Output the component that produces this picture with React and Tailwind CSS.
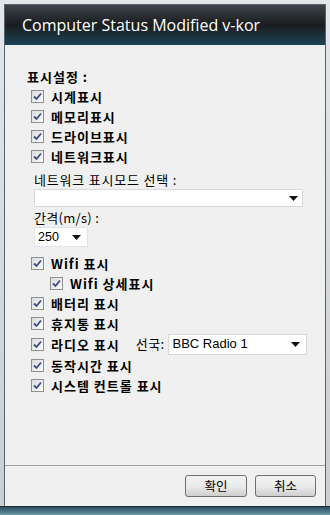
import React from 'react';

const KR = { fontFamily: '"Noto Sans CJK KR", "Liberation Sans", sans-serif' };

function Check({ label, className = '' }) {
  return (
    <div className={`flex items-center h-[20px] ${className}`}>
      <span className="w-[13px] h-[13px] border border-[#8e8f8f] bg-gradient-to-br from-[#dcdcdc] to-[#fbfbfb] flex items-center justify-center">
        <svg width="9" height="9" viewBox="0 0 9 9">
          <path d="M1 4.5 L3.5 7 L8 1.5" fill="none" stroke="#3c4b8a" strokeWidth="1.8" />
        </svg>
      </span>
      <span className="ml-[7px] text-[13px] tracking-[1px] font-bold text-black leading-none" style={KR}>{label}</span>
    </div>
  );
}

function Arrow() {
  return (
    <svg width="9" height="5" viewBox="0 0 9 5">
      <path d="M0 0 H9 L4.5 5 Z" fill="#111" />
    </svg>
  );
}

export default function App() {
  return (
    <div className="w-[330px] h-[515px] bg-gradient-to-b from-[#e4e7ea] to-[#c9ced3] px-[4px] pt-[4px] pb-0 flex flex-col" style={KR}>
      <div className="flex-1 flex flex-col border border-[#5a6168] border-b-0">
        <div className="h-[40px] bg-gradient-to-b from-[#3d444b] via-[#1a1d1f] to-[#1b4257] flex items-center pl-[17px]">
          <span className="text-white text-[16px]" style={{ fontFamily: '"Open Sans", "Noto Sans", sans-serif' }}>
            Computer Status Modified v-kor
          </span>
        </div>
        <div className="flex-1 bg-[#f0f0f0] flex flex-col">
          <div className="flex-1 pl-[22px] pt-[25px]">
            <div className="text-[13px] tracking-[1px] font-bold leading-none h-[16px]">표시설정 :</div>
            <div className="pl-[4px]">
              <Check label="시계표시" />
              <Check label="메모리표시" />
              <Check label="드라이브표시" />
              <Check label="네트워크표시" />
              <div className="pl-[3px] text-[13px] tracking-[0.8px] text-black leading-none mt-[7px]">네트워크 표시모드 선택 :</div>
              <div className="ml-[3px] mt-[3px] w-[269px] h-[18px] bg-white border border-[#d9d9d9] flex items-center justify-end pr-[4px]">
                <Arrow />
              </div>
              <div className="pl-[3px] text-[13px] tracking-[0.3px] leading-none mt-[4px]">간격(m/s) :</div>
              <div className="ml-[3px] mt-[3px] w-[54px] h-[20px] bg-white border border-[#e2e2e2] flex items-center justify-between pl-[3px] pr-[6px]">
                <span className="text-[12.5px]" style={{ fontFamily: '"Liberation Sans", sans-serif' }}>250</span>
                <Arrow />
              </div>
              <div className="mt-[6px]">
                <Check label="Wifi 표시" />
                <Check label="Wifi 상세표시" className="pl-[19px]" />
                <Check label="배터리 표시" />
                <Check label="휴지통 표시" />
                <div className="flex items-center h-[22px]">
                  <Check label="라디오 표시" />
                  <span className="ml-[16px] text-[13px] tracking-[0.4px]">선국:</span>
                  <div className="ml-[3px] w-[139px] h-[21px] bg-white border border-[#d9d9d9] flex items-center justify-between pl-[4px] pr-[6px]">
                    <span className="text-[13px]" style={{ fontFamily: '"Liberation Sans", sans-serif' }}>BBC Radio 1</span>
                    <Arrow />
                  </div>
                </div>
                <Check label="동작시간 표시" />
                <Check label="시스템 컨트롤 표시" />
              </div>
            </div>
          </div>
          <div className="border-t border-[#a0a0a0] shadow-[0_1px_0_#ffffff] h-[41px] flex items-center justify-end gap-[8px] pr-[9px]">
            <button className="w-[62px] h-[22px] rounded-[3px] border border-[#707070] bg-gradient-to-b from-[#f2f2f2] via-[#ebebeb] to-[#cfcfcf] text-[12.5px]">확인</button>
            <button className="w-[61px] h-[22px] rounded-[3px] border border-[#707070] bg-gradient-to-b from-[#f2f2f2] via-[#ebebeb] to-[#cfcfcf] text-[12.5px]">취소</button>
          </div>
        </div>
      </div>
      <div className="h-[9px] -mx-[4px] bg-gradient-to-b from-[#2b4d5e] to-[#6d98a6] border-t border-[#1c2a32]" />
    </div>
  );
}
